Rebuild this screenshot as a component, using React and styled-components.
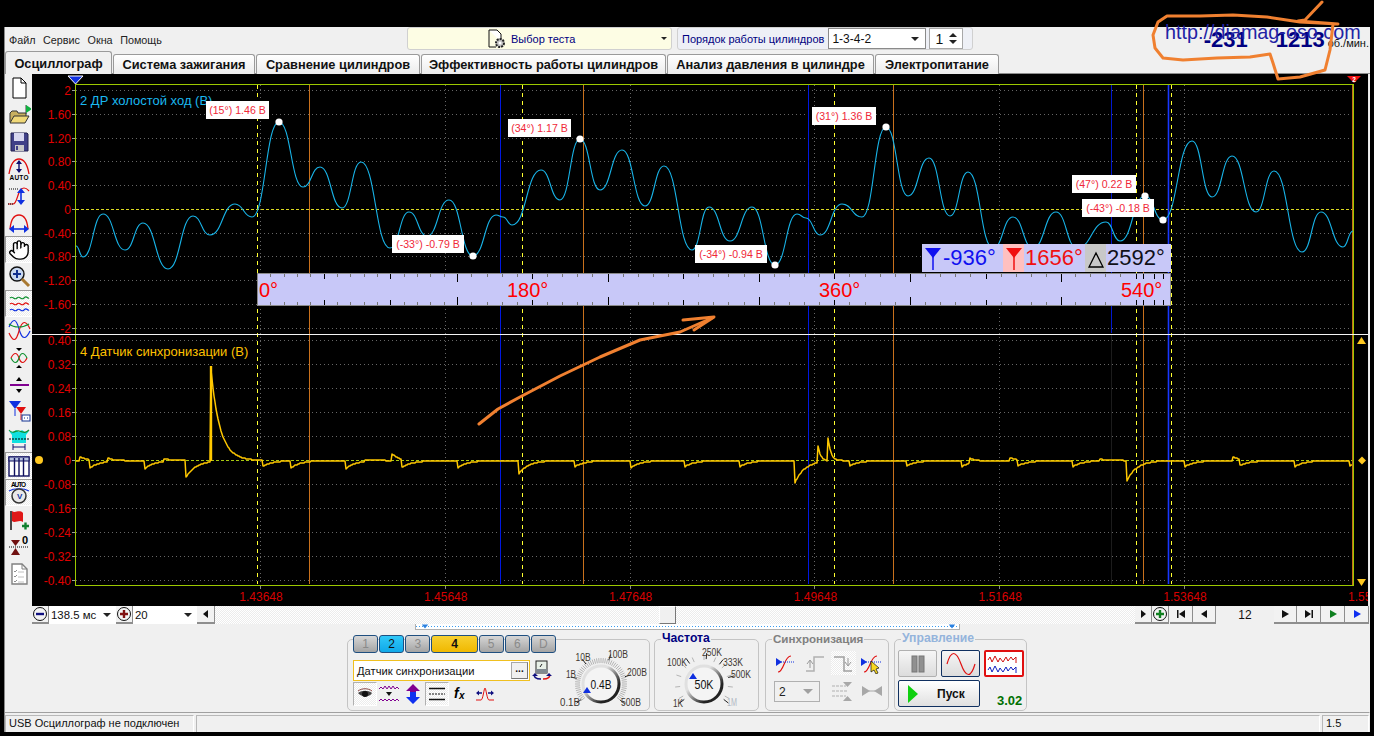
import React from "react";
import styled, { createGlobalStyle } from "styled-components";
import { Hand } from "lucide-react";

const GlobalStyle = createGlobalStyle`
  html, body {
    margin: 0;
    padding: 0;
    background: #000;
    overflow: hidden;
  }
  * { box-sizing: border-box; }
  body, svg text {
    font-family: "Liberation Sans", Arial, sans-serif;
  }
`;

const Page = styled.div`
  position: relative;
  width: 1374px;
  height: 736px;
  padding: 27px 4px 4px;
  background: #000;
`;

const Window = styled.div`
  display: flex;
  flex-direction: column;
  height: 705px;
  background: #f0f0f0;
  border-left: 1px solid #8a8a8a;
  color: #111;
  font-size: 11px;
`;

// top bar
const TopBar = styled.div`
  display: flex;
  align-items: flex-start;
  height: 26px;
  flex-shrink: 0;
`;

const Menu = styled.div`
  display: flex;
  gap: 7.5px;
  width: 402px;
  padding: 7px 0 0 4px;
  color: #222;
  font-size: 10.8px;
`;

const TestSelect = styled.div`
  display: flex;
  align-items: center;
  width: 265px;
  height: 23px;
  padding: 0 4px 0 78px;
  background: #fdfde4;
  border: 1px solid #d0d0d0;
  border-radius: 3px;
  color: #000080;
  svg { margin-right: 5px; }
`;

const CaretDown = styled.span`
  width: 0;
  height: 0;
  margin-left: ${({ $auto }) => ($auto ? "auto" : "0")};
  border-left: ${({ $s }) => $s || 3}px solid transparent;
  border-right: ${({ $s }) => $s || 3}px solid transparent;
  border-top: ${({ $s }) => $s || 3}px solid ${({ $c }) => $c || "#222"};
`;

const CylPanel = styled.div`
  display: flex;
  align-items: center;
  width: 296px;
  height: 23px;
  margin-left: 5px;
  padding-left: 4px;
  background: #eef0f6;
  border: 1px solid #d0d0d0;
  border-radius: 3px;
  color: #000080;
`;

const CylSelect = styled.div`
  display: flex;
  align-items: center;
  width: 98px;
  height: 21px;
  margin-left: 4px;
  padding: 0 6px 0 3px;
  background: #fff;
  border: 1px solid #8a8a8a;
  color: #111;
  font-size: 12px;
`;

const Spinner = styled.div`
  display: flex;
  align-items: center;
  justify-content: space-between;
  width: 34px;
  height: 21px;
  margin-left: 3px;
  padding: 0 5px;
  background: #fff;
  border: 1px solid #a8a8a8;
  color: #111;
  font-size: 14px;
`;

const SpinArrows = styled.div`
  display: flex;
  flex-direction: column;
  gap: 3px;
`;

const CaretUp = styled.span`
  width: 0;
  height: 0;
  border-left: 4px solid transparent;
  border-right: 4px solid transparent;
  border-bottom: 4px solid #222;
`;

const Rpm = styled.div`
  display: flex;
  align-items: baseline;
  margin-left: auto;
  padding-right: 1px;
  color: #000080;
`;

const RpmValue = styled.span`
  margin-left: ${({ $gap }) => $gap || 0}px;
  font-size: 22px;
  font-weight: bold;
`;

const RpmUnit = styled.span`
  margin-left: 3px;
  color: #111;
  font-size: 11px;
`;

const UrlText = styled.div`
  position: absolute;
  left: 1165px;
  top: 20px;
  color: #2222a4;
  font-size: 19.8px;
  line-height: 24px;
`;

// tabs
const Tabs = styled.div`
  display: flex;
  align-items: flex-end;
  gap: 1px;
  height: 21px;
  flex-shrink: 0;
  border-bottom: 1px solid #8c8c8c;
`;

const Tab = styled.div`
  display: flex;
  align-items: center;
  justify-content: center;
  width: ${({ $w }) => $w}px;
  height: ${({ $active }) => ($active ? 23 : 20)}px;
  margin-bottom: -1px;
  background: ${({ $active }) =>
    $active ? "#f0f0f0" : "linear-gradient(#fff, #ececec)"};
  border: 1px solid #9a9a9a;
  border-bottom: none;
  border-radius: 3px 3px 0 0;
  color: #111;
  font-size: 12.8px;
  font-weight: bold;
`;

// main area
const Main = styled.div`
  display: flex;
  height: 532px;
  flex-shrink: 0;
`;

const SideBar = styled.div`
  display: flex;
  flex-direction: column;
  width: 27px;
  flex-shrink: 0;
`;

const ToolBtn = styled.div`
  display: flex;
  align-items: center;
  justify-content: center;
  height: 27px;
  ${({ $pressed }) =>
    $pressed &&
    `
    background: repeating-conic-gradient(#fff 0 25%, #ececec 0 50%) 0 0 / 2px 2px;
    border-top: 1px solid #9a9a9a;
    border-left: 1px solid #9a9a9a;
    border-bottom: 1px solid #fff;
  `}
`;

const Scope = styled.div`
  position: relative;
  flex: 0 0 1337px;
  background: #000;
  border-right: 1px solid #e8e8e8;
  overflow: hidden;
`;

const ChartSvg = styled.svg`
  display: block;
  width: 1336px;
  height: 532px;
`;

const Popup = styled.div`
  position: absolute;
  left: ${({ $x }) => $x - 32}px;
  top: ${({ $y }) => $y - 74}px;
  display: flex;
  align-items: center;
  justify-content: center;
  width: ${({ $w }) => $w}px;
  height: 18px;
  background: #fff;
  color: #f02838;
  font-size: 10.6px;
`;

const ChannelName = styled.div`
  position: absolute;
  left: 48px;
  top: ${({ $y }) => $y}px;
  color: ${({ $c }) => $c};
  font-size: 13px;
`;

const Ruler = styled.div`
  position: absolute;
  left: 225px;
  top: 199px;
  width: 914px;
  height: 33px;
  background: #c8c8f8;
  border: 1px solid #8a8a8a;
  svg { position: absolute; left: -1px; top: -1px; }
`;

const RulerMark = styled.span`
  position: absolute;
  left: ${({ $x }) => $x}px;
  top: 4px;
  color: #ff0000;
  font-size: 20px;
  line-height: 24px;
`;

const Readout = styled.div`
  position: absolute;
  left: 890px;
  top: 170px;
  display: flex;
  width: 249px;
  height: 28px;
  background: #c8c8f8;
`;

const ReadIcon = styled.div`
  display: flex;
  align-items: center;
  justify-content: center;
  width: 21px;
  background: ${({ $bg }) => $bg || "transparent"};
`;

const ReadValue = styled.div`
  width: ${({ $w }) => $w}px;
  padding-left: ${({ $pl }) => $pl ?? 1}px;
  color: ${({ $c }) => $c};
  font-size: 22px;
  line-height: 27px;
`;

// scroll row
const ScrollRow = styled.div`
  display: flex;
  height: 18px;
  flex-shrink: 0;
  padding-left: 27px;
  padding-right: 1px;
`;

const NavBtn = styled.div`
  display: flex;
  align-items: center;
  justify-content: center;
  width: ${({ $w }) => $w || 17}px;
  flex-shrink: 0;
  margin-right: ${({ $mr }) => $mr || 0}px;
  background: #f2f2f2;
  border-right: 1px solid #8e8e8e;
  border-bottom: 2px solid #8e8e8e;
`;

const Field = styled.div`
  display: flex;
  align-items: center;
  justify-content: space-between;
  width: ${({ $w }) => $w}px;
  flex-shrink: 0;
  padding: 0 5px 0 2px;
  background: #fff;
  color: #111;
  font-size: 11.4px;
`;

const Track = styled.div`
  position: relative;
  flex: 1;
  background: repeating-conic-gradient(#fff 0 25%, #ececec 0 50%) 0 0 / 2px 2px;
`;

const Thumb = styled.div`
  position: absolute;
  left: 444px;
  top: 0;
  width: 17px;
  height: 18px;
  background: #f0f0f0;
  border: 1px solid #fff;
  border-right-color: #777;
  border-bottom-color: #777;
`;

const PageNo = styled.div`
  width: 58px;
  flex-shrink: 0;
  color: #111;
  font-size: 12px;
  line-height: 18px;
  text-align: center;
`;

// controls
const Controls = styled.div`
  display: flex;
  flex-direction: column;
  height: 88px;
  flex-shrink: 0;
`;

const Strip = styled.div`
  display: flex;
  align-items: center;
  justify-content: space-between;
  width: 545px;
  height: 6px;
  flex-shrink: 0;
  margin-left: 410px;
  padding: 0 3px 0 5px;
  background: #fff;
  border: 1px solid #b0b0b0;
  border-top: none;
  background-image: linear-gradient(90deg, #3a9cf0 50%, transparent 50%);
  background-size: 3px 1px;
  background-repeat: repeat-x;
  background-position: 0 2px;
`;

const PanelRow = styled.div`
  display: flex;
  margin-top: 9px;
  padding-left: 342px;
`;

const Panel = styled.div`
  position: relative;
  width: ${({ $w }) => $w}px;
  height: 72px;
  margin-left: ${({ $ml }) => $ml || 0}px;
  border: 1px solid #c4c4c4;
  border-radius: 5px;
`;

const ChannelPanel = styled(Panel)`
  display: flex;
`;

const ChannelCol = styled.div`
  display: flex;
  flex-direction: column;
  width: 208px;
  flex-shrink: 0;
  padding-left: 5px;
`;

const PanelTitle = styled.div`
  position: absolute;
  left: 6px;
  top: -9px;
  padding: 0 1px;
  background: #f0f0f0;
  color: ${({ $c }) => $c};
  font-size: ${({ $s }) => $s || 12.2}px;
  font-weight: bold;
  line-height: 15px;
`;

const ChannelTabs = styled.div`
  display: flex;
  margin-top: -5px;
  gap: 1px;
`;

const ChannelBtn = styled.div`
  display: flex;
  align-items: center;
  justify-content: center;
  width: ${({ $w }) => $w || 26}px;
  height: 18px;
  background: ${({ $bg }) => $bg || "linear-gradient(#d6d6d6, #a4a4a4)"};
  border: 1px solid #1f4f80;
  border-radius: 3px;
  color: ${({ $c }) => $c || "#8a8a8a"};
  font-size: 12px;
  font-weight: ${({ $bold }) => ($bold ? "bold" : "normal")};
`;

const ChannelInputRow = styled.div`
  display: flex;
  margin-top: 7px;
  align-items: center;
`;

const ChannelInput = styled.div`
  display: flex;
  align-items: center;
  justify-content: space-between;
  width: 177px;
  height: 21px;
  padding-left: 3px;
  padding-right: 1px;
  background: #fff;
  border: 1px solid #f0c020;
  color: #111;
  font-size: 11.2px;
`;

const DotsBtn = styled.div`
  width: 17px;
  height: 17px;
  background: #f0f0f0;
  border: 1px solid #a8a8a8;
  border-right-color: #777;
  border-bottom-color: #777;
  font-size: 10px;
  font-weight: bold;
  line-height: 11px;
  text-align: center;
`;

const IconRow = styled.div`
  display: flex;
  margin-top: 1px;
`;

const IconBtn = styled.div`
  display: flex;
  align-items: center;
  justify-content: center;
  width: ${({ $w }) => $w || 24}px;
  height: ${({ $h }) => $h || 24}px;
  ${({ $pressed }) =>
    $pressed &&
    `
    background: repeating-conic-gradient(#fff 0 25%, #ececec 0 50%) 0 0 / 2px 2px;
    border: 1px solid #b0b0b0;
    border-right-color: #fff;
    border-bottom-color: #fff;
  `}
`;

const SyncPressed = styled(IconBtn)`
  background: repeating-conic-gradient(#fff 0 25%, #ececec 0 50%) 0 0 / 2px 2px;
`;

const SyncGrid = styled.div`
  display: grid;
  grid-template-columns: repeat(4, 28.5px);
  grid-template-rows: 26px 21px;
  row-gap: 5px;
  padding: 10px 0 0 6px;
  justify-items: center;
  align-items: center;
`;

const SyncSelect = styled.div`
  grid-column: span 2;
  display: flex;
  align-items: center;
  justify-content: space-between;
  justify-self: start;
  width: 46px;
  height: 21px;
  margin-left: 2px;
  padding: 0 6px 0 4px;
  border: 1px solid #b0b0b0;
  color: #222;
  font-size: 12px;
`;

const RunGrid = styled.div`
  display: grid;
  grid-template-columns: 39px 39px 40px;
  grid-template-rows: 27px 27px;
  column-gap: 4px;
  row-gap: 3px;
  padding: 10px 0 0 3px;
`;

const RunBtn = styled.div`
  display: flex;
  align-items: center;
  justify-content: center;
  background: ${({ $bg }) => $bg || "linear-gradient(#f6f6f6, #dcdcdc)"};
  border: ${({ $bw }) => $bw || 1}px solid ${({ $b }) => $b};
  border-radius: 2px;
`;

const StartBtn = styled(RunBtn)`
  grid-column: span 2;
  justify-content: flex-start;
  gap: 19px;
  padding-left: 9px;
  color: #111;
  font-size: 12px;
  font-weight: bold;
`;

const Version = styled.div`
  align-self: end;
  margin-bottom: -1px;
  padding-left: 13px;
  color: #007000;
  font-size: 13px;
  font-weight: bold;
`;

// status bar
const StatusBar = styled.div`
  display: flex;
  height: 20px;
  flex-shrink: 0;
  gap: 2px;
  padding-top: 2px;
  border-top: 1px solid #a0a0a0;
  border-right: 1px solid #f0f0f0;
`;

const StatusCell = styled.div`
  width: ${({ $w }) => $w}px;
  flex: ${({ $w }) => ($w ? "none" : "1")};
  padding-left: 3px;
  border-top: 1px solid #b8b8b8;
  border-left: 1px solid #b8b8b8;
  border-right: 1px solid #fff;
  color: #111;
  font-size: 11px;
  line-height: 15px;
`;

const Scribble = styled.svg`
  position: absolute;
  left: 0;
  top: 0;
  width: 1374px;
  height: 736px;
  pointer-events: none;
`;

// chart data
const topWave = [
  [76, 246], [83, 257], [103, 214], [125, 250], [143, 223], [168, 269], [193, 216],
  [210, 235], [235, 204], [252, 217], [279, 122], [303, 187], [320, 167], [342, 208],
  [361, 162], [390, 248], [409, 212], [427, 236], [449, 200], [473, 256], [496, 215],
  [503, 217], [512, 225], [541, 170], [560, 200], [580, 139], [600, 190], [622, 150],
  [645, 206], [664, 166], [692, 250], [709, 207], [730, 241], [752, 207], [775, 265],
  [797, 214], [806, 218], [820, 235], [842, 204], [862, 217], [886, 127], [908, 196],
  [929, 158], [950, 216], [968, 172], [993, 248], [1013, 217], [1033, 248], [1056, 212],
  [1077, 248], [1106, 222], [1120, 241], [1145, 196], [1163, 220], [1192, 141],
  [1212, 197], [1232, 156], [1256, 212], [1274, 171], [1302, 252], [1321, 212],
  [1343, 247], [1353, 231],
];

const smoothPath = (pts) => {
  let d = `M${pts[0][0]} ${pts[0][1]}`;
  for (let i = 1; i < pts.length; i++) {
    const [x0, y0] = pts[i - 1];
    const [x1, y1] = pts[i];
    const mx = (x0 + x1) / 2;
    d += ` C${mx} ${y0} ${mx} ${y1} ${x1} ${y1}`;
  }
  return d;
};

const drops = [
  [90, 8], [145, 8], [186, 17], [263, 6], [291, 7], [346, 8], [402, 8], [458, 7], [519, 13],
  [575, 6], [631, 7], [685, 6], [740, 6], [795, 22], [850, 5], [907, 5], [962, 6], [1018, 6],
  [1073, 6], [1127, 20], [1185, 6], [1240, 6], [1295, 6], [1350, 5],
];
const bumps = [
  [80, 4, 6], [108, 4, 6], [164, 3, 8], [365, 2, 8], [392, 7, 6], [818, 17, 3], [828, 23, 3],
  [970, 5, 6], [1010, 3, 6], [1100, 2, 6], [1233, 4, 6], [211, 92, 9],
];

const lowerPath = () => {
  let d = "M76 461";
  for (let x = 77; x <= 1352; x++) {
    let y = 460.5;
    drops.forEach(([sx, depth]) => {
      if (x >= sx) y += depth * Math.exp(-(x - sx) / 10);
    });
    bumps.forEach(([bx, amp, tau]) => {
      if (x >= bx) y -= amp * Math.exp(-(x - bx) / tau);
    });
    d += ` L${x} ${Math.round(y)}`;
  }
  return d;
};

const upperLabels = ["2", "1.60", "1.20", "0.80", "0.40", "0", "-0.40", "-0.80", "-1.20", "-1.60", "-2"];
const lowerLabels = ["0.40", "0.32", "0.24", "0.16", "0.08", "0", "-0.08", "-0.16", "-0.24", "-0.32", "-0.40"];
const timeLabels = ["1.43648", "1.45648", "1.47648", "1.49648", "1.51648", "1.53648", "1.55648"];
const timeX = timeLabels.map((_, i) => 260 + i * 184.8);

const dots = [[279, 122], [580, 139], [473, 256], [775, 265], [886, 127], [1145, 196], [1163, 220]];

const popups = [
  { x: 206, y: 101, w: 63, t: "(15°) 1.46 В" },
  { x: 508, y: 119, w: 63, t: "(34°) 1.17 В" },
  { x: 392, y: 235, w: 72, t: "(-33°) -0.79 В" },
  { x: 695, y: 245, w: 72, t: "(-34°) -0.94 В" },
  { x: 812, y: 107, w: 64, t: "(31°) 1.36 В" },
  { x: 1072, y: 175, w: 64, t: "(47°) 0.22 В" },
  { x: 1082, y: 199, w: 72, t: "(-43°) -0.18 В" },
];

const rulerTicks = () => {
  const list = [];
  for (let i = 1; i <= 15; i++) list.push({ x: 13.33 * i, k: i % 15 === 0 ? 2 : i % 5 === 0 ? 1 : 0 });
  for (let i = 1; i <= 40; i++) {
    list.push({ x: 199.3 + i * 15.12, k: i % 10 === 0 ? 2 : i % 5 === 0 ? 1 : 0 });
  }
  [818, 833, 848, 863, 879].forEach((x, i) => list.push({ x, k: i === 4 ? 1 : 0 }));
  [886, 897, 906].forEach((x) => list.push({ x, k: 1 }));
  return list;
};

// small drawings
const Ico = ({ w = 24, h = 24, vb, children }) => (
  <svg width={w} height={h} viewBox={vb || `0 0 ${w} ${h}`}>{children}</svg>
);

const MiniText = styled.text`
  font-size: ${({ $s }) => $s || 6.5}px;
  font-weight: bold;
`;

const sideIcons = [
  { k: "doc", el: <><path d="M6 2h8l5 5v15H6z" fill="#fff" stroke="#000" /><path d="M14 2v5h5" fill="none" stroke="#000" /></> },
  { k: "open", el: <><path d="M3 19V10l2-2h5l1 2h8v3" fill="#c8b060" stroke="#333" /><path d="M3 20l4-7h15l-4 7z" fill="#f0d878" stroke="#333" /><path d="M19 2v9" stroke="#444" /><path d="M19 2l6 4-6 4z" fill="#10b040" /></> },
  { k: "save", el: <><path d="M4 3h16l1 1v17H4z" fill="#404088" stroke="#202050" /><rect x="7" y="3" width="10" height="8" fill="#d8d8f0" /><rect x="8" y="15" width="9" height="6" fill="#c8c8c8" /><rect x="9" y="16" width="2" height="4" fill="#404088" /></> },
  { k: "auto", el: <><path d="M2 17C4 5 8 2 12 2s8 3 10 15" fill="none" stroke="#e01010" strokeWidth="1.3" /><path d="M12 4v11" stroke="#101070" strokeWidth="1.4" /><path d="M9 7l3-4 3 4zM9 12l3 4 3-4z" fill="#101070" /><MiniText x="2.5" y="23" textLength="19">AUTO</MiniText></> },
  { k: "fit", el: <><path d="M2 5h10" stroke="#000" strokeDasharray="1 1" /><path d="M1 20h5C11 20 10 4 17 4c3 0 4 2 5 3" fill="none" stroke="#e01010" strokeWidth="1.2" /><path d="M1 20h5" stroke="#000" strokeDasharray="1 1" /><path d="M14 6v13" stroke="#1030e0" strokeWidth="1.6" /><path d="M10 9l4-5 4 5zM10 16l4 5 4-5z" fill="#1030e0" /></> },
  { k: "spread", el: <><path d="M3 18C4 7 8 4 12 4s8 3 9 14" fill="none" stroke="#e01010" strokeWidth="1.3" /><path d="M4 18h16" stroke="#1030e0" strokeWidth="1.6" /><path d="M7 14l-5 4 5 4zM17 14l5 4-5 4z" fill="#1030e0" /></> },
  { k: "hand", pressed: true, el: <Hand x="1" y="1" width="22" height="22" color="#000" fill="#fff" strokeWidth={1.5} /> },
  { k: "zoom", el: <><circle cx="10" cy="9" r="7" fill="#c8d8f0" stroke="#111" strokeWidth="1.4" /><path d="M6 9h8M10 5v8" stroke="#103090" strokeWidth="2" /><path d="M15 14l7 7" stroke="#a87830" strokeWidth="3" /></> },
  { k: "waves", pressed: true, el: <><path d="M3 6c3-3 4 3 7 0s4 3 7 0 3 1 5 0" fill="none" stroke="#109030" strokeWidth="1.2" /><path d="M3 12c3-3 4 3 7 0s4 3 7 0 3 1 5 0" fill="none" stroke="#e01010" strokeWidth="1.2" /><path d="M3 18c3-3 4 3 7 0s4 3 7 0 3 1 5 0" fill="none" stroke="#1030e0" strokeWidth="1.2" /></> },
  { k: "overlay", el: <><path d="M2 8c4-9 7-9 10 2s7 11 11 2" fill="none" stroke="#1030e0" strokeWidth="1.2" /><path d="M2 14c4 9 7 9 10-2s7-11 11-2" fill="none" stroke="#e01010" strokeWidth="1.2" /><path d="M2 5c5 4 14 4 20 0" fill="none" stroke="#109030" strokeWidth="1.2" /></> },
  { k: "swap", el: <><path d="M4 12c3-6 6-6 8 0s5 6 8 0" fill="none" stroke="#e01010" strokeWidth="1.2" /><path d="M4 12c3 6 6 6 8 0s5-6 8 0" fill="none" stroke="#109030" strokeWidth="1.2" /><path d="M9 2h6l-3 3zM9 22h6l-3-3z" fill="#000" /></> },
  { k: "line", el: <><path d="M3 12h19" stroke="#800090" strokeWidth="2" /><path d="M9 8h6l-3-4zM9 16h6l-3 4z" fill="#000" /></> },
  { k: "marks", el: <><path d="M2 1h12l-6 8z" fill="#1030e0" /><path d="M8 9v7" stroke="#1030e0" /><path d="M9 7h10l-5 7z" fill="#e01010" /><path d="M14 14v6" stroke="#e01010" /><rect x="15" y="15" width="8" height="6" fill="#fff" stroke="#103090" /><path d="M17 18h1M20 18h1" stroke="#103090" /></> },
  { k: "window", el: <><path d="M5 8L2 4l4 1 3-2 3 2 3-2 3 2 4-1-3 4v8H5z" fill="#10e0e0" /><path d="M2 3c4 5 6 0 10 1s6 3 10-1" fill="none" stroke="#109030" strokeWidth="1.2" /><path d="M2 12h20" stroke="#000" strokeDasharray="2 1" /><path d="M6 20h12" stroke="#101070" /><path d="M6 17v6M18 17v6" stroke="#101070" /></> },
  { k: "table", pressed: true, el: <><rect x="2" y="3" width="20" height="19" fill="#fff" stroke="#101060" strokeWidth="1.4" /><rect x="2" y="3" width="20" height="4" fill="#b8c4e0" stroke="#101060" /><path d="M7.5 4v18M12 4v18M16.5 4v18" stroke="#101060" strokeWidth="1.4" /></> },
  { k: "autov", pressed: true, el: <><MiniText x="4" y="6" textLength="15">AUTO</MiniText><path d="M2 10c5-3 15-3 20 0" fill="none" stroke="#1030e0" strokeWidth="1.2" /><circle cx="12" cy="15" r="7" fill="#e8e8e8" stroke="#333" strokeWidth="1.5" /><MiniText x="10" y="18" $s={8} fill="#1030a0">V</MiniText></> },
  { k: "flag", el: <><path d="M4 3v19" stroke="#111" strokeWidth="1.5" /><path d="M5 3c3 3 7-2 11 2v9c-4-3-8 2-11-1z" fill="#e01818" /><path d="M15 18h7M18.5 14.5v7" stroke="#108030" strokeWidth="2.4" /></> },
  { k: "zero", el: <><path d="M2 12h20" stroke="#000" strokeDasharray="1 1" /><path d="M4 5h9l-4.500 6z" fill="#701010" /><path d="M4 20h9l-4.500-7z" fill="#701010" /><MiniText x="15" y="9" $s={11} fontWeight="normal">0</MiniText></> },
  { k: "report", el: <><path d="M5 2h10l5 5v15H5z" fill="#fff" stroke="#808080" strokeWidth="1.4" /><path d="M15 2v5h5" fill="none" stroke="#808080" /><path d="M7 9l1 1 2-2M7 14l1 1 2-2M7 19l1 1 2-2" fill="none" stroke="#909090" /><path d="M11 10h6M11 15h6M11 20h6" stroke="#c0c0c0" /></> },
];

const Triangle = ({ d, c = "#111", w = 10, h = 10 }) => (
  <Ico w={w} h={h} vb="0 0 10 10"><path d={d} fill={c} /></Ico>
);

const CircleBtn = ({ c, plus }) => (
  <Ico w={16} h={16}>
    <circle cx="8" cy="8" r="6.5" fill="#f4f4f4" stroke="#111" />
    <path d={plus ? "M4 8h8M8 4v8" : "M4 8h8"} stroke={c} strokeWidth="2.4" />
  </Ico>
);

const YMark = ({ c }) => (
  <Ico w={18} h={26}>
    <path d="M1 3h16l-8 10z" fill={c} />
    <path d="M9 8v17" stroke={c} strokeWidth="1.5" />
  </Ico>
);

const dialPolar = (cx, cy, r, deg) => {
  const a = ((deg - 90) * Math.PI) / 180;
  return [cx + r * Math.cos(a), cy + r * Math.sin(a)];
};

const Dial = ({ id, box, c, major, labels, center, centerW, hatch, marker }) => {
  const minor = [];
  if (hatch) for (let a = -130; a <= 130; a += 5) minor.push(a);
  else for (let a = -120; a <= 120; a += 24) minor.push(a);
  return (
    <svg width={box[2]} height={box[3]} viewBox={box.join(" ")}>
      <defs>
        <linearGradient id={id} x1="0" y1="0" x2="1" y2="1">
          <stop offset="0.35" stopColor="#e0e0e0" />
          <stop offset="0.75" stopColor="#222" />
        </linearGradient>
      </defs>
      {minor.map((a) => {
        const [x1, y1] = dialPolar(c[0], c[1], hatch ? 21 : 24, a);
        const [x2, y2] = dialPolar(c[0], c[1], hatch ? 26 : 29, a);
        return <line key={a} x1={x1} y1={y1} x2={x2} y2={y2} stroke="#b4b4b4" strokeWidth="1" />;
      })}
      {major.map((a) => {
        const [x1, y1] = dialPolar(c[0], c[1], 25, a);
        const [x2, y2] = dialPolar(c[0], c[1], 31, a);
        return <line key={a} x1={x1} y1={y1} x2={x2} y2={y2} stroke="#222" strokeWidth="1" />;
      })}
      <circle cx={c[0]} cy={c[1]} r="18" fill="#f4f4f4" stroke={`url(#${id})`} strokeWidth="3" />
      <path d={`M${c[0] + marker[0] - 4} ${c[1] + marker[1] + 3}h8l-4-6z`} fill="#1030e0" />
      <text x={c[0] - centerW / 2} y={c[1] + 5} fontSize="13.5" fill="#111" textLength={centerW} lengthAdjust="spacingAndGlyphs">{center}</text>
      {labels.map(([t, x, y, fade]) => (
        <text
          key={t}
          x={x - (t.length * 5) / 2}
          y={y + 3.5}
          fontSize="10"
          textLength={t.length * 5}
          lengthAdjust="spacingAndGlyphs"
          fill={fade ? "#b0b8c4" : "#403830"}
        >
          {t}
        </text>
      ))}
    </svg>
  );
};

const Chart = () => (
  <ChartSvg viewBox="32 74 1336 532">
    {/* grid */}
    {upperLabels.map((t, i) => {
      const y = 90.5 + i * 23.75;
      return (
        <g key={t + i}>
          <path d={`M72 ${y}H75`} stroke="#999" shapeRendering="crispEdges" />
          {t !== "0" && <path d={`M76 ${y}H1352`} stroke="#666" strokeDasharray="1 3" shapeRendering="crispEdges" />}
          <text x="71" y={y + 4.5} textAnchor="end" fontSize="12" fill="#e00000">{t}</text>
        </g>
      );
    })}
    {lowerLabels.map((t, i) => {
      const y = 340.5 + i * 24;
      return (
        <g key={t + i}>
          <path d={`M72 ${y}H75`} stroke="#999" shapeRendering="crispEdges" />
          {t !== "0" && <path d={`M76 ${y}H1352`} stroke="#666" strokeDasharray="1 3" shapeRendering="crispEdges" />}
          <text x="71" y={y + 4.5} textAnchor="end" fontSize="12" fill="#e00000">{t}</text>
        </g>
      );
    })}
    {timeX.map((x, i) => (
      <g key={x}>
        <path d={`M${Math.round(x)}.5 85V584`} stroke="#666" strokeDasharray="1 3" shapeRendering="crispEdges" />
        <path d={`M${Math.round(x)}.5 585V589`} stroke="#888" shapeRendering="crispEdges" />
        <text x={x + 1} y="601" textAnchor="middle" fontSize="12" fill="#d80000">{timeLabels[i]}</text>
      </g>
    ))}
    <path d="M76 209.500H1352" stroke="#d8d820" strokeDasharray="3 2" shapeRendering="crispEdges" />
    <path d="M76 460.500H1352" stroke="#a8c810" strokeDasharray="3 2" shapeRendering="crispEdges" />

    {/* cursors */}
    {[309.5, 583.5, 893.5, 1143.5].map((x) => (
      <path key={x} d={`M${x} 85V584`} stroke="#c8701c" shapeRendering="crispEdges" />
    ))}
    {[500.5, 808.5].map((x) => (
      <path key={x} d={`M${x} 85V584`} stroke="#0018e0" shapeRendering="crispEdges" />
    ))}
    <path d="M1111.500 85V333" stroke="#0018d0" shapeRendering="crispEdges" />
    <path d="M1111.500 335V584" stroke="#1c1c1c" shapeRendering="crispEdges" />
    <path d="M1168.500 85V584" stroke="#1838ff" strokeWidth="1.6" />
    {[257.5, 522.5, 834.5, 1136.5, 1171.5].map((x) => (
      <path key={x} d={`M${x} 85V584`} stroke="#ffff30" strokeDasharray="4 4" shapeRendering="crispEdges" />
    ))}

    {/* frame */}
    <path d="M75.500 84.500H1353.500V585.500H75.500Z" fill="none" stroke="#9cc800" shapeRendering="crispEdges" />
    <path d="M1352.500 85V585" stroke="#c8701c" shapeRendering="crispEdges" />
    <path d="M32 334.500H1368" stroke="#f4f4f4" shapeRendering="crispEdges" />

    {/* traces */}
    <path d={smoothPath(topWave)} fill="none" stroke="#18b4e8" strokeWidth="1.1" />
    <path d={lowerPath()} fill="none" stroke="#ffc800" strokeWidth="1.5" strokeLinejoin="round" />
    <path d="M211 461V366" stroke="#ffc800" strokeWidth="2.4" />

    {dots.map(([x, y]) => (
      <circle key={x} cx={x} cy={y} r="3.6" fill="#fff" />
    ))}

    {/* end markers */}
    <path d="M68 76h15l-7.500 8z" fill="#1030e0" stroke="#fff" />
    <path d="M1347 76h14l-7 7z" fill="#f01010" />
    <text x="1354" y="81.500" textAnchor="middle" fontSize="6.500" fontWeight="bold" fill="#fff">2</text>
    <circle cx="39" cy="460" r="4" fill="#ffc820" />
    <path d="M1357 344h9l-4.500-7z" fill="#ffc820" />
    <path d="M1358 460.500l4-4 4 4-4 4z" fill="#ffc820" />
    <path d="M1357 579h9l-4.500 7z" fill="#ffc820" />
  </ChartSvg>
);

const RulerTicks = () => (
  <svg width="914" height="33">
    {rulerTicks().map(({ x, k }) => {
      const len = k === 2 ? 8 : k === 1 ? 5 : 3;
      const c = k ? "#000" : "#777";
      return (
        <g key={x} stroke={c} shapeRendering="crispEdges">
          <path d={`M${Math.round(x)}.5 1v${len}`} />
          <path d={`M${Math.round(x)}.5 ${32 - len}v${len}`} />
        </g>
      );
    })}
  </svg>
);

const tabs = [
  ["Осциллограф", 107, true],
  ["Система зажигания", 142],
  ["Сравнение цилиндров", 164],
  ["Эффективность работы цилиндров", 245],
  ["Анализ давления в цилиндре", 207],
  ["Электропитание", 124],
];

export default function App() {
  return (
    <Page>
      <GlobalStyle />
      <Window>
        <TopBar>
          <Menu>
            <span>Файл</span>
            <span>Сервис</span>
            <span>Окна</span>
            <span>Помощь</span>
          </Menu>
          <TestSelect>
            <Ico w={20} h={22}>
              <path d="M3 2h8l4 4v8" fill="#fff" stroke="#111" />
              <path d="M3 2v17h7" fill="none" stroke="#111" />
              <circle cx="14" cy="15" r="4" fill="#c0c0c0" stroke="#222" strokeWidth="2" strokeDasharray="2 1" />
              <circle cx="14" cy="15" r="1.500" fill="#fff" />
            </Ico>
            Выбор теста
            <CaretDown $auto />
          </TestSelect>
          <CylPanel>
            Порядок работы цилиндров
            <CylSelect>
              1-3-4-2
              <CaretDown $auto $s={4} />
            </CylSelect>
            <Spinner>
              1
              <SpinArrows>
                <CaretUp />
                <CaretDown $s={4} />
              </SpinArrows>
            </Spinner>
          </CylPanel>
          <Rpm>
            <RpmValue>-231</RpmValue>
            <RpmValue $gap={28}>1213</RpmValue>
            <RpmUnit>об./мин.</RpmUnit>
          </Rpm>
        </TopBar>
        <Tabs>
          {tabs.map(([t, w, active]) => (
            <Tab key={t} $w={w} $active={active}>{t}</Tab>
          ))}
        </Tabs>
        <Main>
          <SideBar>
            {sideIcons.map(({ k, el, pressed }) => (
              <ToolBtn key={k} $pressed={pressed}>
                <Ico>{el}</Ico>
              </ToolBtn>
            ))}
          </SideBar>
          <Scope>
            <Chart />
            <ChannelName $y={19} $c="#1ab8f0">2 ДР холостой ход (В)</ChannelName>
            <ChannelName $y={270} $c="#ffc000">4 Датчик синхронизации (В)</ChannelName>
            {popups.map((p) => (
              <Popup key={p.t} $x={p.x} $y={p.y} $w={p.w}>{p.t}</Popup>
            ))}
            <Readout>
              <ReadIcon><YMark c="#1010f0" /></ReadIcon>
              <ReadValue $c="#1010f0" $w={60} $pl={0}>-936°</ReadValue>
              <ReadIcon $bg="#ffc0c0"><YMark c="#f01010" /></ReadIcon>
              <ReadValue $c="#f01010" $w={61}>1656°</ReadValue>
              <ReadIcon $bg="#c8c8c8">
                <Ico w={18} h={22}><path d="M9 6l7 14H2z" fill="none" stroke="#000" strokeWidth="1.3" /></Ico>
              </ReadIcon>
              <ReadValue $c="#101018" $w={60}>2592°</ReadValue>
            </Readout>
            <Ruler>
              <RulerTicks />
              <RulerMark $x={1}>0°</RulerMark>
              <RulerMark $x={249}>180°</RulerMark>
              <RulerMark $x={561}>360°</RulerMark>
              <RulerMark $x={863}>540°</RulerMark>
            </Ruler>
          </Scope>
        </Main>
        <ScrollRow>
          <NavBtn><CircleBtn c="#101080" /></NavBtn>
          <Field $w={67}>138.5 мс<CaretDown $s={4} /></Field>
          <NavBtn><CircleBtn c="#801010" plus /></NavBtn>
          <Field $w={64}>20<CaretDown $s={4} /></Field>
          <NavBtn $w={18}><Triangle d="M7 1v8L2 5z" /></NavBtn>
          <Track><Thumb /></Track>
          <NavBtn $w={17}><Triangle d="M3 1v8l5-4z" /></NavBtn>
          <NavBtn $w={17} $mr={1}><CircleBtn c="#108020" plus /></NavBtn>
          <NavBtn $w={23}><Triangle d="M1 1v8h1.500V1zM9 1v8L3 5z" /></NavBtn>
          <NavBtn $w={23}><Triangle d="M8 1v8L2 5z" /></NavBtn>
          <PageNo>12</PageNo>
          <NavBtn $w={23}><Triangle d="M2 1v8l7-4z" /></NavBtn>
          <NavBtn $w={24}><Triangle d="M1 1v8l6-4zM7.500 1v8H9V1z" /></NavBtn>
          <NavBtn $w={24}><Triangle d="M2 1v8l7-4z" c="#108020" /></NavBtn>
          <NavBtn $w={24}><Triangle d="M2 1v8l7-4z" c="#1030f0" /></NavBtn>
        </ScrollRow>
        <Controls>
          <Strip>
            <Triangle d="M1 2h8L5 7z" c="#2a80e0" w={8} h={8} />
            <Triangle d="M1 2h8L5 7z" c="#2a80e0" w={8} h={8} />
          </Strip>
          <PanelRow>
            <ChannelPanel $w={303}>
              <ChannelCol>
                <ChannelTabs>
                  <ChannelBtn>1</ChannelBtn>
                  <ChannelBtn $bg="linear-gradient(#30c8f8, #10a8e8)" $c="#111">2</ChannelBtn>
                  <ChannelBtn>3</ChannelBtn>
                  <ChannelBtn $w={48} $bg="linear-gradient(#f8d030, #f0b800)" $c="#111" $bold>4</ChannelBtn>
                  <ChannelBtn>5</ChannelBtn>
                  <ChannelBtn>6</ChannelBtn>
                  <ChannelBtn>D</ChannelBtn>
                </ChannelTabs>
                <ChannelInputRow>
                  <ChannelInput>
                    Датчик синхронизации
                    <DotsBtn>...</DotsBtn>
                  </ChannelInput>
                  <IconBtn $w={24} $h={21}>
                    <Ico w={22} h={21}>
                      <rect x="5" y="1" width="11" height="12" fill="#e8f0e8" stroke="#222" />
                      <rect x="5" y="9" width="11" height="4" fill="#808890" />
                      <path d="M9 7l2-3" stroke="#222" />
                      <path d="M4 14c-2 3 1 5 6 5" fill="none" stroke="#101080" strokeWidth="1.3" />
                      <path d="M18 14c2 3-1 5-6 5" fill="none" stroke="#e01010" strokeWidth="1.3" />
                      <path d="M1 16l3-3 3 3zM15 16l3-3 3 3z" fill="#101080" />
                    </Ico>
                  </IconBtn>
                </ChannelInputRow>
                <IconRow>
                  <IconBtn $pressed>
                    <Ico w={20} h={20}>
                      <path d="M3 9c4-3 10-3 14 0-2 4-10 5-14 0z" fill="#444" />
                      <circle cx="10" cy="10" r="3" fill="#111" />
                      <path d="M3 7c4-3 10-3 14 0" fill="none" stroke="#884444" />
                    </Ico>
                  </IconBtn>
                  <IconBtn>
                    <Ico w={22} h={22}>
                      <path d="M1 6l2-2 2 2 2-3 2 3 2-3 2 3 2-3 2 3 2-2 2 2" fill="none" stroke="#800090" />
                      <path d="M1 18l2-2 2 2 2-2 2 2 2-2 2 2 2-2 2 2 2-2 2 2" fill="none" stroke="#800090" />
                      <path d="M8 9h6l-3 4z" fill="#111" />
                    </Ico>
                  </IconBtn>
                  <IconBtn>
                    <Ico w={20} h={22}>
                      <path d="M10 1l7 7h-4v5H7V8H3z" fill="#800090" />
                      <path d="M10 21l7-7h-4V9H7v5H3z" fill="#1030f0" />
                    </Ico>
                  </IconBtn>
                  <IconBtn $pressed>
                    <Ico w={20} h={20}>
                      <path d="M2 4.500h16M2 15.500h16" stroke="#111" strokeWidth="1.4" />
                      <path d="M2 10h16" stroke="#111" strokeDasharray="2 1" />
                    </Ico>
                  </IconBtn>
                  <IconBtn>
                    <Ico w={20} h={20}>
                      <text x="3" y="14" fontSize="14" fontWeight="bold" fontStyle="italic" fontFamily="'Liberation Serif', serif">f</text>
                      <text x="8" y="15" fontSize="10" fontWeight="bold" fontStyle="italic" fontFamily="'Liberation Serif', serif">x</text>
                    </Ico>
                  </IconBtn>
                  <IconBtn>
                    <Ico w={20} h={20}>
                      <path d="M1 16h5c2 0 3-12 4-12s2 12 4 12h5" fill="none" stroke="#e01010" />
                      <path d="M2 9h5M13 9h5" stroke="#101080" strokeWidth="1.3" />
                      <path d="M1 9l3-2.500v5zM19 9l-3-2.500v5z" fill="#101080" />
                    </Ico>
                  </IconBtn>
                </IconRow>
              </ChannelCol>
              <Dial
                id="volts"
                box={[556, 640, 93, 70]}
                c={[601, 684]}
                hatch
                major={[-128, -77, -37, 18, 73, 130]}
                marker={[-14, 6]}
                center="0.4В"
                centerW={21}
                labels={[
                  ["10В", 583, 657], ["100В", 618, 654], ["1В", 571, 674],
                  ["200В", 637, 672], ["0.1В", 570, 702], ["500В", 631, 702],
                ]}
              />
            </ChannelPanel>
            <Panel $w={105} $ml={4}>
              <PanelTitle $c="#000080">Частота</PanelTitle>
              <Dial
                id="freq"
                box={[655, 640, 103, 70]}
                c={[704, 684]}
                major={[-128, -35, 5, 38, 75, 128]}
                marker={[-11, -8]}
                center="50K"
                centerW={19}
                labels={[
                  ["250K", 712, 652], ["100K", 677, 662], ["333K", 733, 662],
                  ["500K", 741, 674], ["1K", 678, 703], ["1M", 732, 702, true],
                ]}
              />
            </Panel>
            <Panel $w={124} $ml={6}>
              <PanelTitle $c="#808080" $s={11.6}>Синхронизация</PanelTitle>
              <SyncGrid>
                <IconBtn>
                  <Ico w={22} h={22}>
                    <path d="M3 20c6 0 6-16 13-16" fill="none" stroke="#e01010" strokeWidth="1.2" />
                    <path d="M4 10h15" stroke="#1030e0" strokeDasharray="1 1" />
                    <path d="M1 6v8l6-4z" fill="#1030e0" />
                  </Ico>
                </IconBtn>
                <IconBtn>
                  <Ico w={22} h={22}>
                    <path d="M2 19h8V5h10" fill="none" stroke="#b0b0b0" strokeWidth="1.5" />
                    <path d="M6 9v7M3 12l3-4 3 4" fill="none" stroke="#999" />
                  </Ico>
                </IconBtn>
                <SyncPressed $w={25} $h={24}>
                  <Ico w={22} h={22}>
                    <path d="M2 5h10v14h8" fill="none" stroke="#a0a0a0" strokeWidth="1.5" />
                    <path d="M16 6v7M13 10l3 4 3-4" fill="none" stroke="#999" />
                  </Ico>
                </SyncPressed>
                <IconBtn>
                  <Ico w={24} h={22}>
                    <path d="M4 20c6 0 6-16 13-16" fill="none" stroke="#e01010" strokeWidth="1.2" />
                    <path d="M4 10h18" stroke="#1030e0" strokeDasharray="1 1" />
                    <path d="M1 6v8l6-4z" fill="#1030e0" />
                    <path d="M11 9l8 7-3 1 2 4-2 1-2-4-3 2z" fill="#f8d820" stroke="#111" strokeWidth="0.7" />
                  </Ico>
                </IconBtn>
                <SyncSelect>
                  2
                  <CaretDown $s={5} $c="#a0a0a0" />
                </SyncSelect>
                <IconBtn $h={21}>
                  <Ico w={24} h={21}>
                    <path d="M1 5h14M1 10h16M1 15h14" stroke="#b0b0b0" strokeDasharray="3 1" />
                    <path d="M12 1h9l-4.500 5zM12 20h9l-4.500-5z" fill="#a8a8a8" />
                  </Ico>
                </IconBtn>
                <IconBtn $h={21}>
                  <Ico w={22} h={21}>
                    <path d="M1 5v10l8-5zM21 5v10l-8-5z" fill="#a8a8a8" />
                    <path d="M8 10h6" stroke="#a8a8a8" />
                  </Ico>
                </IconBtn>
              </SyncGrid>
            </Panel>
            <Panel $w={133} $ml={5}>
              <PanelTitle $c="#94b4dc">Управление</PanelTitle>
              <RunGrid>
                <RunBtn $b="#b0b0b0">
                  <Ico w={14} h={20}>
                    <rect x="1" y="2" width="5" height="16" fill="#909090" stroke="#777" />
                    <rect x="8" y="2" width="5" height="16" fill="#909090" stroke="#777" />
                  </Ico>
                </RunBtn>
                <RunBtn $b="#103060">
                  <Ico w={30} h={24}>
                    <path d="M1 12c4-14 9-14 14 0s10 14 14 0" fill="none" stroke="#e01010" strokeWidth="1.2" />
                  </Ico>
                </RunBtn>
                <RunBtn $b="#e01010" $bw={2} $bg="#fff">
                  <Ico w={34} h={22}>
                    <path d="M1 7l2-3 2 5 3-6 3 6 2-4 3 4 3-5 2 4 3-4 2 3 3-3 v6" fill="none" stroke="#d01010" />
                    <path d="M1 17l2-3 2 5 3-6 3 6 2-4 3 4 3-5 2 4 3-4 2 3 3-3 v6" fill="none" stroke="#1020c0" />
                  </Ico>
                </RunBtn>
                <StartBtn $b="#103060" $bg="linear-gradient(#fff, #e0e0e0)">
                  <Ico w={10} h={20}><path d="M0 1v18l10-9z" fill="#10d010" /></Ico>
                  Пуск
                </StartBtn>
                <Version>3.02</Version>
              </RunGrid>
            </Panel>
          </PanelRow>
        </Controls>
        <StatusBar>
          <StatusCell $w={189}>USB Осциллограф не подключен</StatusCell>
          <StatusCell />
          <StatusCell $w={47}>1.5</StatusCell>
        </StatusBar>
      </Window>
      <UrlText>http://diamag-oso.com</UrlText>
      <Scribble viewBox="0 0 1374 736">
        <g fill="none" stroke="#f08030" strokeWidth="3" strokeLinecap="round" strokeLinejoin="round">
          <path d="M1322 2L1305 20L1298 21L1338 24L1300 22L1267 17L1233 15L1200 16L1167 16L1158 22L1153 35L1155 48L1163 58L1183 60L1217 58L1250 57L1270 54L1273 63L1278 79L1300 77L1325 70L1330 50L1333 24" />
          <path d="M479 424L498 409L520 397L560 376L600 357L640 340L680 332L712 318" />
          <path d="M683 320L714 317L694 330" />
        </g>
      </Scribble>
    </Page>
  );
}
